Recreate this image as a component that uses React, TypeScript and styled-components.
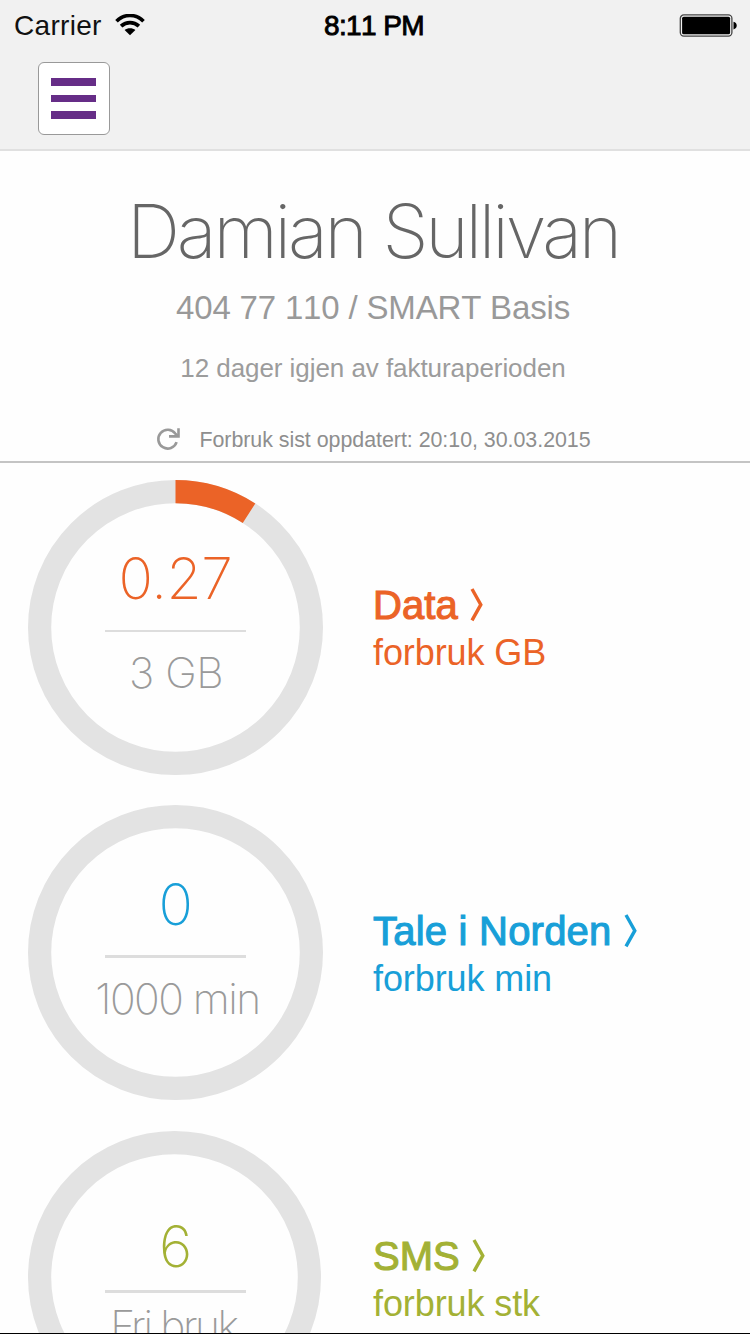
import React from 'react';
import styled, { createGlobalStyle } from 'styled-components';

const GlobalStyle = createGlobalStyle`
  * { box-sizing: border-box; }
  html, body { margin: 0; padding: 0; }
  body {
    width: 750px;
    height: 1334px;
    overflow: hidden;
    background: #fff;
    font-family: "Liberation Sans", Arial, sans-serif;
    font-kerning: none;
  }
`;

const Screen = styled.div`
  display: flex;
  flex-direction: column;
  width: 750px;
  height: 1334px;
  overflow: hidden;
  background: #fefefe;
  border-bottom: 1px solid #000;
`;

const Header = styled.header`
  flex: none;
  height: 151px;
  background: #f1f1f1;
  border-bottom: 2px solid #e0e0e0;
`;

const StatusBar = styled.div`
  display: grid;
  grid-template-columns: 1fr auto 1fr;
  align-items: center;
  height: 51px;
  padding: 0 13px 0 14px;
  font-size: 28px;
  line-height: 51px;
  color: #111;
`;

const Carrier = styled.div`
  display: flex;
  align-items: center;
  gap: 13px;
  letter-spacing: 0.3px;
  > svg { margin-top: -1px; }
`;

const Clock = styled.div`
  padding-right: 3px;
  color: #000;
  letter-spacing: -0.6px;
  -webkit-text-stroke: 0.9px #000;
`;

const BatterySlot = styled.div`
  display: flex;
  justify-content: flex-end;
`;

const Toolbar = styled.div`
  padding: 11px 38px;
`;

const MenuButton = styled.button`
  display: flex;
  flex-direction: column;
  align-items: center;
  justify-content: center;
  gap: 9px;
  width: 72px;
  height: 73px;
  padding: 0 1px 0 0;
  background: #fff;
  border: 1px solid #999;
  border-radius: 6px;
`;

const MenuBar = styled.span`
  width: 45px;
  height: 7.4px;
  background: #662d87;
`;

const Profile = styled.section`
  display: flex;
  flex: none;
  flex-direction: column;
  align-items: center;
  height: 312px;
  padding: 40px 4px 0 0;
  border-bottom: 2px solid #c4c4c4;
  white-space: nowrap;
`;

const Name = styled.h1`
  margin: 0;
  font: 200 74px/80px Inter, sans-serif;
  letter-spacing: -3.2px;
  color: #666;
`;

const Plan = styled.div`
  margin-top: 17px;
  font-size: 33px;
  line-height: 40px;
  letter-spacing: -0.17px;
  color: #999;
`;

const Period = styled.div`
  margin-top: 24px;
  font-size: 26px;
  line-height: 32px;
  letter-spacing: -0.06px;
  color: #9c9c9c;
`;

const Updated = styled.div`
  display: flex;
  align-items: center;
  gap: 18px;
  margin-top: 43px;
  padding-left: 1px;
  font-size: 21.4px;
  line-height: 26px;
  letter-spacing: -0.03px;
  color: #8e8e8e;
  > svg { margin-top: -2px; }
`;

const UsageList = styled.main`
  display: flex;
  flex-direction: column;
  gap: 30.6px;
  padding: 16.7px 0 0 28px;
`;

const UsageRow = styled.article`
  display: flex;
  flex: none;
  gap: 50px;
  height: 295px;
`;

const Gauge = styled.div`
  display: grid;
  flex: none;
  width: 295px;
  height: 295px;
  > * { grid-area: 1 / 1; }
`;

const Reading = styled.div<{ $top: number }>`
  display: flex;
  flex-direction: column;
  align-items: center;
  padding-top: ${p => p.$top}px;
  white-space: nowrap;
`;

const Value = styled.div<{ $color: string }>`
  font: 200 57px/64px Inter, sans-serif;
  letter-spacing: -0.4px;
  color: ${p => p.$color};
`;

const Rule = styled.div<{ $thickness: number; $gap: number }>`
  width: 141px;
  height: ${p => p.$thickness}px;
  margin-top: ${p => p.$gap}px;
  background: #ddd;
`;

const Limit = styled.div<{ $gap: number; $spacing: number; $left: number; $right: number }>`
  margin-top: ${p => p.$gap}px;
  padding: 0 ${p => p.$right}px 0 ${p => p.$left}px;
  font: 200 42.5px/50px Inter, sans-serif;
  letter-spacing: ${p => p.$spacing}px;
  color: #9a9a9a;
`;

const Label = styled.div<{ $color: string }>`
  padding-top: 101.5px;
  color: ${p => p.$color};
  white-space: nowrap;
`;

const LabelTitle = styled.div<{ $color: string }>`
  display: flex;
  align-items: center;
  gap: 12px;
  height: 48px;
  font-size: 40px;
  line-height: 48px;
  font-kerning: normal;
  -webkit-text-stroke: 1.1px ${p => p.$color};
`;

const TitleText = styled.span<{ $spacing: number }>`
  letter-spacing: ${p => p.$spacing}px;
`;

const LabelUnit = styled.div`
  font-size: 36px;
  line-height: 47px;
  letter-spacing: -0.1px;
`;

const WifiIcon = () => (
  <svg width="30" height="22" viewBox="0 0 30 22" fill="none" stroke="#000">
    <path d="M1.5 7.2C9.2 -.4 20.8 -.4 28.5 7.2" strokeWidth="3.7" />
    <path d="M6.1 12.2C11.3 7.3 18.7 7.3 23.9 12.2" strokeWidth="3.7" />
    <path d="M9.6 15.9C12.5 13.7 17.5 13.7 20.4 15.9L15 21.3Z" fill="#000" stroke="none" />
  </svg>
);

const BatteryIcon = () => (
  <svg width="58" height="24" viewBox="0 0 58 24">
    <rect x="1.3" y="0.9" width="51.6" height="21.2" rx="3.5" fill="none" stroke="#444" strokeWidth="1.3" />
    <rect x="3.1" y="2.7" width="48" height="17.6" rx="1.6" fill="#000" />
    <path d="M54.5 7.8c2 .3 3.2 1.8 3.2 3.8s-1.2 3.5-3.2 3.8z" fill="#000" />
  </svg>
);

const RefreshIcon = () => (
  <svg width="25" height="24" viewBox="0 0 25 24" fill="none" stroke="#999" strokeWidth="2.6">
    <path d="M20.6 15.2A9.4 9.4 0 1 1 19.3 6.6L21.8 9" />
    <path d="M22.5 1.3V9.4H13" />
  </svg>
);

const Chevron = ({ color }: { color: string }) => (
  <svg width="13" height="34" viewBox="0 0 13 34" fill="none" stroke={color} strokeWidth="3.4">
    <path d="M2 1L10.8 16.7L2 32.4" />
  </svg>
);

const Ring = ({ radius, share, color }: { radius: number; share: number; color: string }) => {
  const mid = radius - 11.6;
  const angle = share * 2 * Math.PI;
  const endX = radius + mid * Math.sin(angle);
  const endY = radius - mid * Math.cos(angle);
  return (
    <svg width="295" height="295" viewBox="0 0 295 295" fill="none" strokeWidth="23.2">
      <circle cx={radius} cy={radius} r={mid} stroke="#e3e3e3" />
      {share > 0 && (
        <path d={`M${radius} ${radius - mid}A${mid} ${mid} 0 0 1 ${endX} ${endY}`} stroke={color} />
      )}
    </svg>
  );
};

const usage = [
  { title: 'Data', unit: 'forbruk GB', value: '0.27', limit: '3 GB', share: 0.091, color: '#eb6327', radius: 147.5, top: 67.3, ruleGap: 19, rule: 2, gap: 15.9, spacing: -0.5, left: 1, right: 0, titleSpacing: 0.1 },
  { title: 'Tale i Norden', unit: 'forbruk min', value: '0', limit: '1000 min', share: 0, color: '#189fd8', radius: 147.5, top: 67.4, ruleGap: 18.6, rule: 3, gap: 15.5, spacing: -1.5, left: 4, right: 0, titleSpacing: 0.22 },
  { title: 'SMS', unit: 'forbruk stk', value: '6', limit: 'Fri bruk', share: 0, color: '#a3b135', radius: 146.5, top: 84, ruleGap: 11, rule: 3, gap: 8, spacing: -2.4, left: 0, right: 4, titleSpacing: 0 },
];

export default function App() {
  return (
    <>
      <GlobalStyle />
      <Screen>
        <Header>
          <StatusBar>
            <Carrier>
              <span>Carrier</span>
              <WifiIcon />
            </Carrier>
            <Clock>8:11 PM</Clock>
            <BatterySlot>
              <BatteryIcon />
            </BatterySlot>
          </StatusBar>
          <Toolbar>
            <MenuButton aria-label="Meny">
              <MenuBar />
              <MenuBar />
              <MenuBar />
            </MenuButton>
          </Toolbar>
        </Header>
        <Profile>
          <Name>Damian Sullivan</Name>
          <Plan>404 77 110 / SMART Basis</Plan>
          <Period>12 dager igjen av fakturaperioden</Period>
          <Updated>
            <RefreshIcon />
            <span>Forbruk sist oppdatert: 20:10, 30.03.2015</span>
          </Updated>
        </Profile>
        <UsageList>
          {usage.map(item => (
            <UsageRow key={item.title}>
              <Gauge>
                <Ring radius={item.radius} share={item.share} color={item.color} />
                <Reading $top={item.top}>
                  <Value $color={item.color}>{item.value}</Value>
                  <Rule $thickness={item.rule} $gap={item.ruleGap} />
                  <Limit $gap={item.gap} $spacing={item.spacing} $left={item.left} $right={item.right}>
                    {item.limit}
                  </Limit>
                </Reading>
              </Gauge>
              <Label $color={item.color}>
                <LabelTitle $color={item.color}>
                  <TitleText $spacing={item.titleSpacing}>{item.title}</TitleText>
                  <Chevron color={item.color} />
                </LabelTitle>
                <LabelUnit>{item.unit}</LabelUnit>
              </Label>
            </UsageRow>
          ))}
        </UsageList>
      </Screen>
    </>
  );
}
